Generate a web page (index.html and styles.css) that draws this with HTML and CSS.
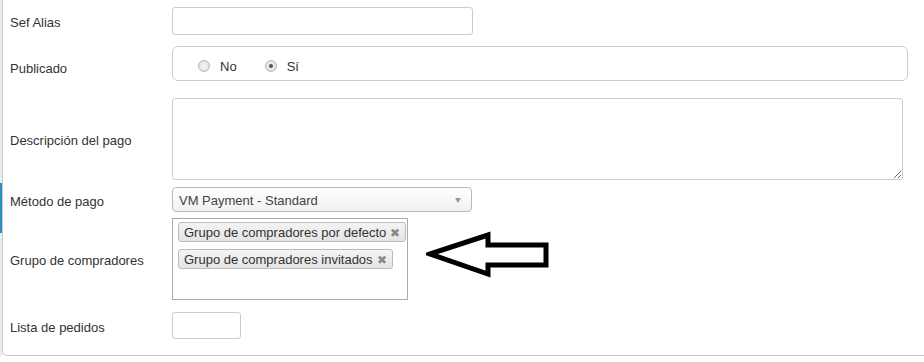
FILE: index.html
```html
<!DOCTYPE html>
<html lang="es">
<head>
    <meta charset="UTF-8">
    <title>Método de pago</title>
    <link rel="stylesheet" href="styles.css">
</head>
<body>
    <div class="page">
        <div class="sidebar"><div class="sidebar-mark"></div></div>
        <div class="panel">
            <div class="row row-alias">
                <label class="row-label">Sef Alias</label>
                <input type="text" class="input-text">
            </div>
            <div class="row row-published">
                <label class="row-label">Publicado</label>
                <div class="radio-box">
                    <label class="radio"><input type="radio" name="published"> No</label>
                    <label class="radio"><input type="radio" name="published" checked> Sí</label>
                </div>
            </div>
            <div class="row row-desc">
                <label class="row-label">Descripción del pago</label>
                <textarea class="textarea"></textarea>
            </div>
            <div class="row row-method">
                <label class="row-label">Método de pago</label>
                <div class="select">VM Payment - Standard<span class="caret"></span></div>
            </div>
            <div class="row row-groups">
                <label class="row-label">Grupo de compradores</label>
                <div class="chosen">
                    <span class="tag">Grupo de compradores por defecto <span class="tag-close">✖</span></span>
                    <span class="tag">Grupo de compradores invitados <span class="tag-close">✖</span></span>
                </div>
                <svg class="arrow" width="124" height="48" viewBox="0 0 124 48">
                    <polygon points="4,24 62,5 62,15 120,15 120,35 62,35 62,44" fill="none" stroke="#000" stroke-width="5" stroke-linejoin="miter"/>
                </svg>
            </div>
            <div class="row row-orders">
                <label class="row-label">Lista de pedidos</label>
                <input type="text" class="input-small">
            </div>
        </div>
    </div>
</body>
</html>
```

FILE: styles.css
```css
body {
    margin: 0;
    font-family: "Liberation Sans", Arial, sans-serif;
    font-size: 13px;
    color: #333;
    background: #fff;
    overflow: hidden;
}
.page {
    display: flex;
    width: 960px;
}
.sidebar {
    width: 2px;
    background: #ececec;
}
.sidebar-mark {
    margin-top: 183px;
    height: 50px;
    background: #2f8fb8;
}
.panel {
    flex: 1;
    border-left: 1px solid #c8c8c8;
    border-bottom: 1px solid #c8c8c8;
    border-bottom-left-radius: 5px;
    padding: 7px 0 16px 7px;
}
.row {
    display: flex;
    align-items: center;
}
.row-label {
    width: 162px;
    flex: none;
    padding-top: 3px;
}
.row-alias { margin-bottom: 11px; }
.row-published { margin-bottom: 17px; }
.row-published .row-label { padding-top: 9px; }
.row-desc { margin-bottom: 7px; }
.row-method { margin-bottom: 6px; }
.row-groups { margin-bottom: 12px; }

.input-text, .input-small, .textarea {
    box-sizing: border-box;
    border: 1px solid #ccc;
    border-radius: 3px;
    background: #fff;
    margin: 0;
    font: inherit;
}
.input-text {
    width: 301px;
    height: 28px;
}
.input-small {
    width: 69px;
    height: 27px;
}
.textarea {
    width: 731px;
    height: 82px;
    resize: both;
    display: block;
}
.radio-box {
    box-sizing: border-box;
    width: 736px;
    height: 35px;
    border: 1px solid #ccc;
    border-radius: 6px;
    display: flex;
    align-items: center;
    padding: 5px 0 0 25px;
    gap: 28px;
}
.radio {
    display: flex;
    align-items: center;
    gap: 10px;
    font-size: 13px;
}
.radio input {
    appearance: none;
    margin: 0;
    width: 12px;
    height: 12px;
    border-radius: 50%;
    border: 1px solid #b8b8b8;
    background: radial-gradient(circle, #f4f4f4 0%, #dcdcdc 100%);
    display: grid;
    place-items: center;
}
.radio input:checked::after {
    content: "";
    width: 4px;
    height: 4px;
    border-radius: 50%;
    background: #555;
}
.select {
    box-sizing: border-box;
    width: 300px;
    height: 25px;
    border: 1px solid #b9b9b9;
    border-radius: 4px;
    background: linear-gradient(#fff, #f1f1f1);
    color: #444;
    padding: 2px 0 0 6px;
    display: flex;
    align-items: center;
    position: relative;
}
.caret {
    position: absolute;
    right: 10px;
    top: 10px;
    border-left: 3px solid transparent;
    border-right: 3px solid transparent;
    border-top: 5px solid #999;
}
.chosen {
    box-sizing: border-box;
    width: 236px;
    height: 82px;
    border: 1px solid #aaa;
    padding: 3px 0 0 5px;
    display: flex;
    flex-direction: column;
    align-items: flex-start;
    gap: 7px;
}
.tag {
    box-sizing: border-box;
    height: 20px;
    border: 1px solid #bbb;
    border-radius: 3px;
    background: linear-gradient(#f4f4f4, #e4e4e4);
    padding: 1px 5px 0 5px;
    display: flex;
    align-items: center;
    gap: 4px;
    color: #333;
    white-space: nowrap;
}
.tag-close {
    color: #888;
    font-size: 12px;
}
.arrow {
    margin-left: 18px;
    margin-bottom: 10px;
}
```
